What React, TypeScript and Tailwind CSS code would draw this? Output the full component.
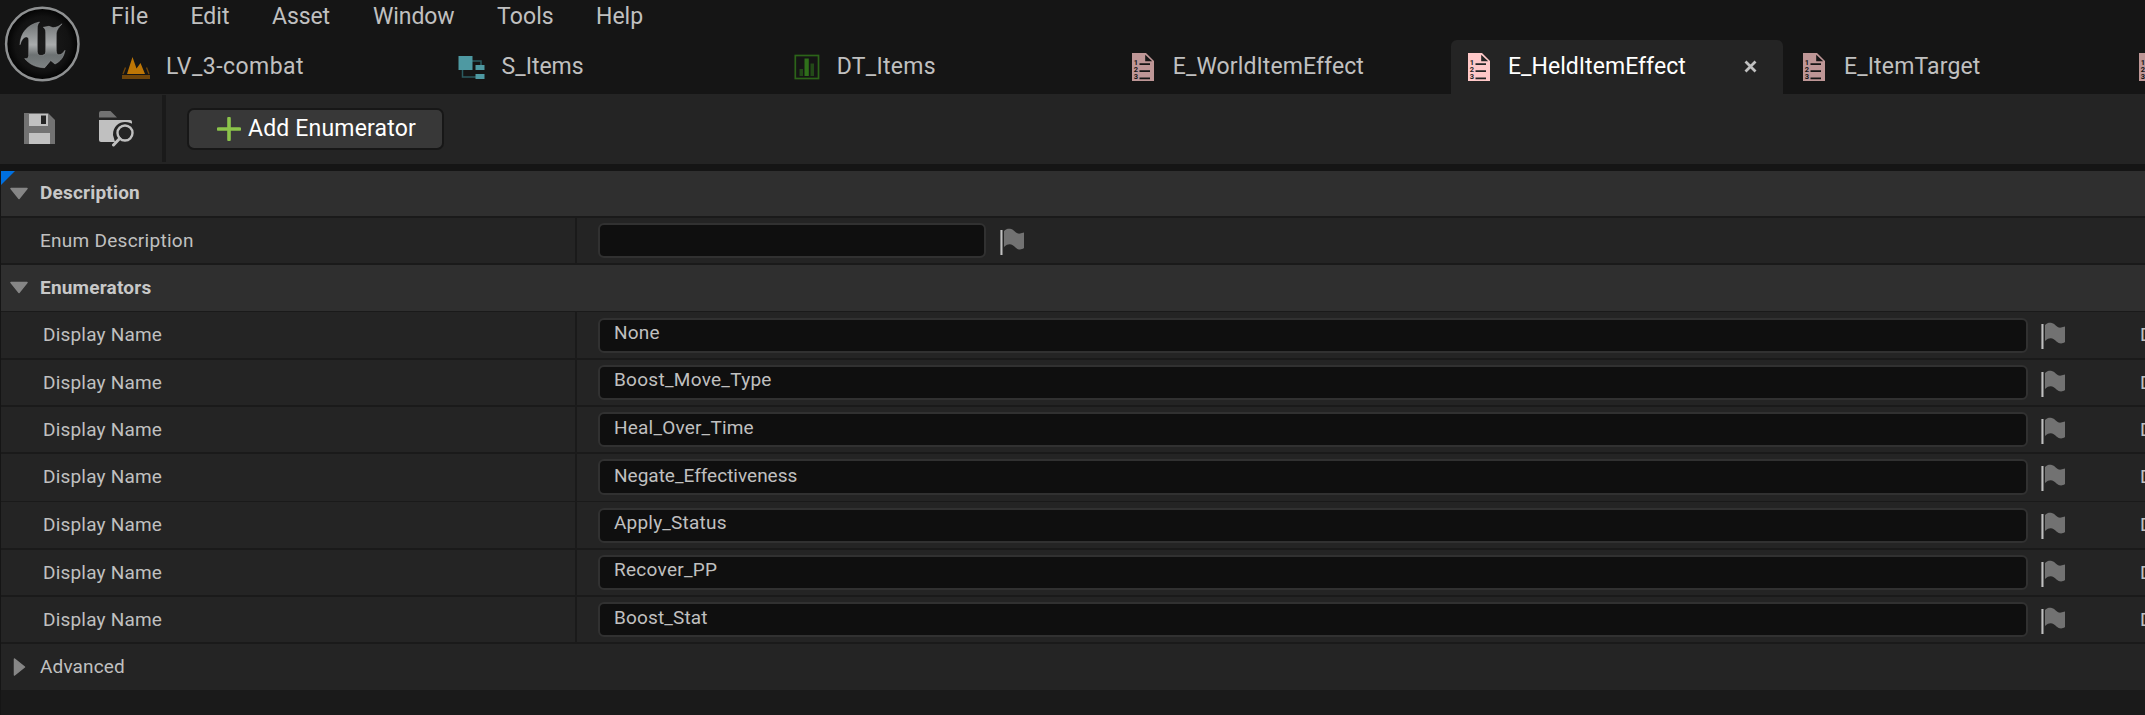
import React from 'react';

function EngineLogo() {
  return (
    <svg className="mt-1.5 ml-1 h-[76px] w-[77px] shrink-0" viewBox="4 6 77 76">
      <defs>
        <linearGradient id="metal" x1="0" y1="0" x2="0" y2="1">
          <stop offset="0" stopColor="#6f7374" />
          <stop offset="0.5" stopColor="#a9abac" />
          <stop offset="0.72" stopColor="#6c7172" />
          <stop offset="1" stopColor="#7d8283" />
        </linearGradient>
        <radialGradient id="disc">
          <stop offset="0" stopColor="#1c1c1c" />
          <stop offset="0.75" stopColor="#121212" />
          <stop offset="1" stopColor="#020202" />
        </radialGradient>
      </defs>
      <circle cx="42.3" cy="44" r="36.2" fill="url(#disc)" stroke="#8f9192" strokeWidth="2.5" />
      <path
        d="M20 44.7C20.3 33 27.5 24.500 39.500 22C37.700 24 37.300 25.700 37.300 28V51.500C37.300 54 38.600 55.500 41 55.500C43.400 55.500 45.700 54.300 45.700 52V32C45.700 29.500 44.700 28 43.300 27.300L49 26.300L53 27.700C56.500 27.500 59.500 26 62 23.800C58.800 27.500 56.700 30 56.300 33V50.500C56.300 53 57 54.800 58.800 54.800C61 54.800 63 53.300 65 50.300C63.800 57 60.500 61.600 55 64L50.700 60.500L44.700 67.700C37 67.800 29.500 64.500 24.700 58.600C27.300 59 28.700 58 28.700 55.500V40C28.700 37.500 27.500 36.500 25.700 37C23.300 37.600 21.300 40.300 20 44.700Z"
        fill="url(#metal)"
        stroke="#a0a3a4"
        strokeWidth="0.5"
      />
    </svg>
  );
}

function LevelIcon() {
  return (
    <svg className="h-[28px] w-[28px]" viewBox="0 0 28 28">
      <path d="M0 18H28V22H0Z" fill="#70450a" />
      <path d="M3.500 10.500L1 17M24.500 10.500L27 17" stroke="#70450a" strokeWidth="1.3" />
      <path d="M5 17L10.500 0L14.500 11.500L18.500 6L23 17Z" fill="#bd7606" />
    </svg>
  );
}

function StructIcon() {
  return (
    <svg className="h-[28px] w-[28px]" viewBox="0 0 28 28">
      <path d="M14 5H23V9M4.500 14V21H18" fill="none" stroke="#2b5b60" strokeWidth="1.5" />
      <path d="M0.500 0H14.500V14H0.500ZM17.500 9H26.500V14H17.500ZM17.500 18H26.500V23H17.500Z" fill="#4e99a2" />
    </svg>
  );
}

function TableIcon() {
  return (
    <svg className="h-[28px] w-[28px]" viewBox="0 0 28 28">
      <rect x="1.300" y="1.500" width="23.200" height="23" fill="none" stroke="#2c6419" strokeWidth="1.700" />
      <path d="M5.500 15H9V22H5.500ZM16.500 9.500H20V22H16.500Z" fill="#234a18" />
      <path d="M10.500 4.500H14.800V22H10.500Z" fill="#2f701a" />
    </svg>
  );
}

function EnumIcon({ active = false }: { active?: boolean }) {
  const fill = active ? '#ffc8c8' : '#be9696';
  const hole = active ? '#242424' : '#151515';
  return (
    <svg className="h-[28px] w-[22px]" viewBox="0 0 22 28">
      <path d="M0 0H14L22 8V28H0Z" fill={fill} />
      <path d="M13.200 1.800V8.300H20.200Z" fill={hole} />
      <path d="M7.500 11.200H18M7.500 18.200H18M7.500 25.300H18" stroke={hole} strokeWidth="1.800" />
      <g fill={hole} fontFamily="Roboto, sans-serif" fontWeight="700" fontSize="7.500">
        <text x="1.800" y="12.300">1</text>
        <text x="1.800" y="19.300">2</text>
        <text x="1.800" y="26.300">3</text>
      </g>
    </svg>
  );
}

function SaveIcon() {
  return (
    <svg className="h-[31px] w-[31px]" viewBox="0 0 31 31">
      <path d="M0 0H24L31 7V31H0Z" fill="#727272" />
      <path d="M5 1H24V13H5ZM5 20H26V31H5Z" fill="#c0c0c0" />
      <path d="M17 2.500H22V11H17Z" fill="#242424" />
    </svg>
  );
}

function BrowseIcon() {
  return (
    <svg className="h-[36px] w-[36px]" viewBox="0 0 36 36">
      <path d="M0 6.500V2Q0 0 2 0H11.500L18 6.500Z" fill="#727272" />
      <path d="M0 9H31Q33 9 33 11V31H2Q0 31 0 29Z" fill="#c0c0c0" />
      <path d="M12 36L16 31L14 24C14 15 20 11 26 11C30 11 33 12 36 15V36Z" fill="#242424" />
      <circle cx="26" cy="22" r="7.500" fill="#242424" stroke="#c0c0c0" strokeWidth="2.400" />
      <path d="M20.700 27.500L14.500 34" stroke="#c0c0c0" strokeWidth="3" strokeLinecap="round" />
    </svg>
  );
}

function FlagIcon() {
  return (
    <svg className="h-[27px] w-[25px] shrink-0" viewBox="0 0 25 27">
      <path d="M0.400 2H2.500V27H0.400Z" fill="#c0c0c0" />
      <path d="M4 3C6 1 8 0.500 10 0.800C14.500 1.500 15.500 6.200 20 5.600L24 4.500V20C21 22.300 18 21.700 15.500 19.500C12.500 16.500 9 14.500 4 19Z" fill="#727272" />
    </svg>
  );
}

const menus = [
  { label: 'File', cls: 'w-[79.5px] tracking-[0.4px]' },
  { label: 'Edit', cls: 'w-[81.5px]' },
  { label: 'Asset', cls: 'w-[101px] tracking-[-0.1px]' },
  { label: 'Window', cls: 'w-[124px] tracking-[-0.1px]' },
  { label: 'Tools', cls: 'w-[99px] tracking-[0.1px]' },
  { label: 'Help', cls: '' },
];

const tabs = [
  { label: 'LV_3-combat', icon: <LevelIcon />, cls: 'pl-[13px]', box: 'w-[44px] pt-[9px]', track: 'tracking-[0.45px]' },
  { label: 'S_Items', icon: <StructIcon />, cls: 'pl-[13px]', box: 'w-[44px] pt-[8px]', track: '' },
  { label: 'DT_Items', icon: <TableIcon />, cls: 'pl-[14px]', box: 'w-[42.5px] pt-[6px]', track: 'tracking-[0.3px]' },
  { label: 'E_WorldItemEffect', icon: <EnumIcon />, cls: 'pl-[16px]', box: 'w-[41px] pt-[5px]', track: 'tracking-[0.1px]' },
  { label: 'E_HeldItemEffect', icon: <EnumIcon active />, cls: 'pl-[16.500px]', box: 'w-[40px] pt-[5px]', track: 'tracking-[0.05px]', active: true },
  { label: 'E_ItemTarget', icon: <EnumIcon />, cls: 'pl-[16px]', box: 'w-[41px] pt-[5px]', track: 'tracking-[0.15px]' },
  { label: '', icon: <EnumIcon />, cls: 'pl-[16px]', box: 'w-[41px] pt-[5px]', track: '' },
];

const enumerators = [
  { name: 'None', row: 'h-[46px] mb-[2px]', field: 'mt-[6px] h-[35px]', text: 'pt-[2px] tracking-[0.2px]' },
  { name: 'Boost_Move_Type', row: 'h-[45px] mb-[2px]', field: 'mt-[5px] h-[35px]', text: 'pt-[2px] tracking-[0.28px]' },
  { name: 'Heal_Over_Time', row: 'h-[45px] mb-[2px]', field: 'mt-[5px] h-[35px]', text: 'pt-[3px] tracking-[0.2px]' },
  { name: 'Negate_Effectiveness', row: 'h-[47px] mb-px', field: 'mt-[5px] h-[36px]', text: 'pt-[4px]' },
  { name: 'Apply_Status', row: 'h-[46px] mb-[2px]', field: 'mt-[6px] h-[35px]', text: 'pt-[2px] tracking-[0.2px]' },
  { name: 'Recover_PP', row: 'h-[45px] mb-[2px]', field: 'mt-[5px] h-[35px]', text: 'pt-[2px] tracking-[0.28px]' },
  { name: 'Boost_Stat', row: 'h-[45px] mb-[2px]', field: 'mt-[5px] h-[35px]', text: 'pt-[3px] tracking-[0.15px]' },
];

function Arrow({ open }: { open: boolean }) {
  return (
    <svg className="mt-[13px] ml-[9px] h-[20px] w-[18px] shrink-0" viewBox="0 0 18 20">
      {open ? (
        <path d="M1 4.500H17L9 14.500Z" fill="#868686" stroke="#868686" strokeWidth="1.500" strokeLinejoin="round" />
      ) : (
        <path d="M4.500 2L14.500 10L4.500 18Z" fill="#868686" stroke="#868686" strokeWidth="1.500" strokeLinejoin="round" />
      )}
    </svg>
  );
}

function Category({ title, size, track }: { title: string; size: string; track: string }) {
  return (
    <div className={`flex bg-[#2f2f2f] ${size}`}>
      <Arrow open />
      <span className={`ml-[12px] font-bold leading-[22px] text-[#c8c8c8] ${track}`}>{title}</span>
    </div>
  );
}

export default function App() {
  return (
    <div className="flex h-[715px] w-[2145px] flex-col overflow-hidden bg-[#151515] font-['Roboto',sans-serif] text-[#c0c0c0] antialiased">
      <header className="flex h-[94px] shrink-0">
        <EngineLogo />
        <div className="flex min-w-0 flex-1 flex-col">
          <nav className="flex h-[40px] pt-[3px] pl-[30px] text-[23px] leading-[28px]">
            {menus.map((m) => (
              <span key={m.label} className={m.cls}>{m.label}</span>
            ))}
          </nav>
          <div className="flex h-[54px] gap-[3.6px] overflow-hidden pl-[28px]">
            {tabs.map((t, i) => (
              <div
                key={i}
                className={`flex h-full w-[332px] shrink-0 pt-[8px] ${t.cls} ${t.active ? 'rounded-t-[6px] bg-[#242424] text-white' : ''}`}
              >
                <div className={`h-full shrink-0 ${t.box}`}>{t.icon}</div>
                <span className={`pt-[5px] text-[23px] leading-[28px] ${t.track}`}>{t.label}</span>
                {t.active && (
                  <svg className="mt-[12px] mr-[26px] ml-auto h-[13px] w-[13px]" viewBox="0 0 13 13">
                    <path d="M1.500 1.500L11.500 11.500M11.500 1.500L1.500 11.500" stroke="#c0c0c0" strokeWidth="2.800" />
                  </svg>
                )}
              </div>
            ))}
          </div>
        </div>
      </header>

      <div className="mb-[7px] flex h-[70px] shrink-0 bg-[#242424]">
        <div className="mt-[19px] ml-[24px]"><SaveIcon /></div>
        <div className="mt-[17px] ml-[44px]"><BrowseIcon /></div>
        <div className="mt-px ml-[27px] h-[67px] w-[4px] bg-[#1a1a1a]" />
        <button className="mt-[14px] ml-[21px] flex h-[42px] w-[257px] rounded-[7px] border-2 border-[#171717] bg-[#383838] pl-[28px] text-white">
          <svg className="mt-[7px] h-[24px] w-[24px]" viewBox="0 0 24 24">
            <path d="M12 1.500V22.500M1.500 12H22.500" stroke="#8bc34a" strokeWidth="3.600" strokeLinecap="round" />
          </svg>
          <span className="mt-[5px] ml-[7px] text-[23px] leading-[28px] tracking-[0.18px] whitespace-nowrap">Add Enumerator</span>
        </button>
      </div>

      <main className="relative ml-px flex flex-1 flex-col bg-[#1a1a1a] text-[19px] leading-[22px]">
        <svg className="absolute top-0 left-0 h-[14px] w-[14px]" viewBox="0 0 14 14">
          <path d="M0 0H14L0 14Z" fill="#0070e0" />
        </svg>
        <Category title="Description" size="h-[45px] mb-[2px]" track="pt-[11px] tracking-[0.2px]" />
        <div className="mb-[2px] flex h-[45px] gap-[2px]">
          <div className="w-[574px] shrink-0 bg-[#242424] pt-[12px] pl-[39px] tracking-[0.27px]">Enum Description</div>
          <div className="flex flex-1 bg-[#242424]">
            <div className="mt-[5px] ml-[21px] h-[35px] w-[388px] rounded-[6px] border-2 border-[#313131] bg-[#0f0f0f]" />
            <div className="mt-[10px] ml-[14px]"><FlagIcon /></div>
          </div>
        </div>
        <Category title="Enumerators" size="h-[46px] mb-px" track="pt-[12px] tracking-[0.2px]" />
        {enumerators.map((e) => (
          <div key={e.name} className={`flex gap-[2px] ${e.row}`}>
            <div className="w-[574px] shrink-0 bg-[#242424] pt-[12px] pl-[42px] tracking-[0.2px]">Display Name</div>
            <div className="flex min-w-0 flex-1 overflow-hidden bg-[#242424]">
              <div className={`ml-[21px] w-[1430px] shrink-0 rounded-[6px] border-2 border-[#313131] bg-[#0f0f0f] pl-[14px] ${e.field}`}>
                <div className={e.text}>{e.name}</div>
              </div>
              <div className="mt-[10px] ml-[13px]"><FlagIcon /></div>
              <span className="ml-[74px] shrink-0 pt-[12px] whitespace-nowrap">Description</span>
            </div>
          </div>
        ))}
        <div className="flex h-[46px] bg-[#242424]">
          <Arrow open={false} />
          <span className="ml-[12px] pt-[12px] tracking-[0.15px]">Advanced</span>
        </div>
      </main>
    </div>
  );
}
